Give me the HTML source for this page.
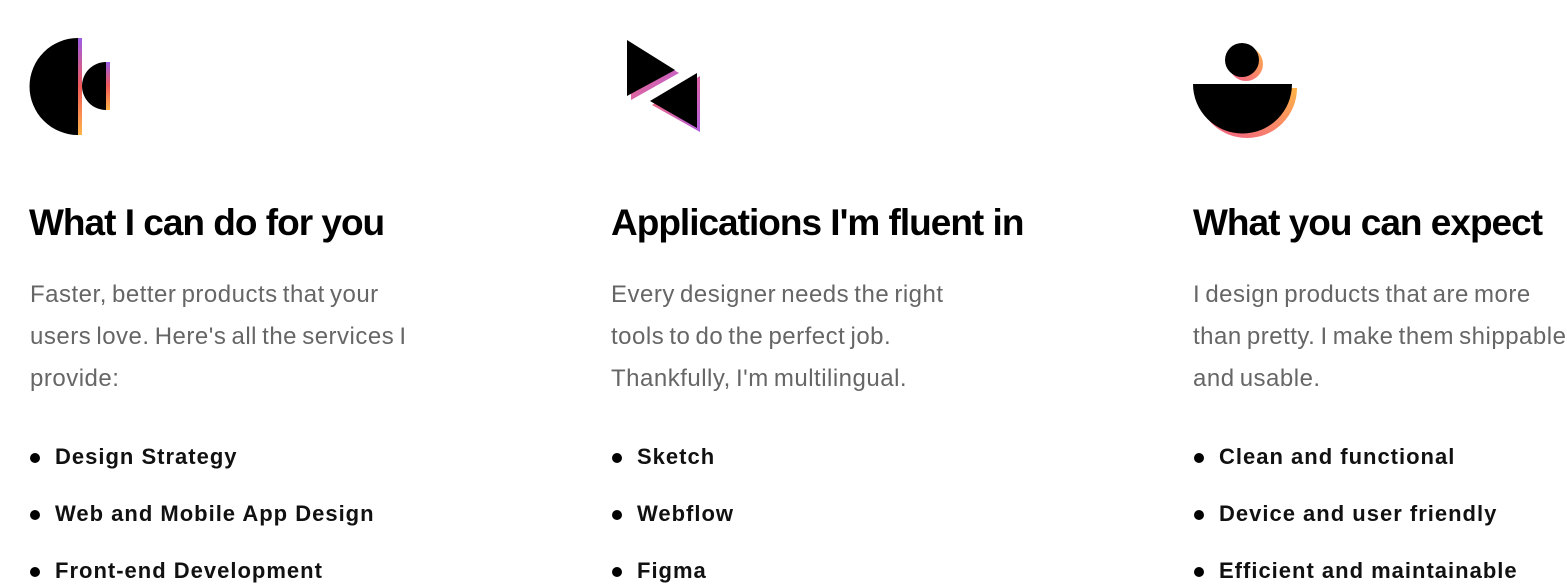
<!DOCTYPE html>
<html><head><style>
body{margin:0;width:1567px;height:583px;overflow:hidden;background:#fff;font-family:"Liberation Sans",sans-serif;position:relative}
h2{position:absolute;margin:0;top:200px;font-size:37px;font-weight:700;letter-spacing:-1.0px;color:#000;white-space:nowrap;line-height:46px}
.p{position:absolute;top:274px;font-size:24px;color:#666;line-height:42px;letter-spacing:0.5px;word-spacing:-2px;white-space:nowrap}
.li{position:absolute;left:25px;font-size:22px;font-weight:700;color:#111;letter-spacing:1px;white-space:nowrap;line-height:30px}
.li:before{content:"";position:absolute;left:-25px;top:11px;width:10px;height:10px;border-radius:50%;background:#000}
</style></head><body>
<svg width="1567" height="583" style="position:absolute;left:0;top:0">
<defs>
<linearGradient id="g1" x1="0" y1="0" x2="0" y2="1"><stop offset="0" stop-color="#9b5de5"/><stop offset=".5" stop-color="#f15a5a"/><stop offset="1" stop-color="#ffb347"/></linearGradient>
<linearGradient id="g2" x1="0" y1="0" x2="1" y2="1"><stop offset="0" stop-color="#ff6b6b"/><stop offset="1" stop-color="#b55ee0"/></linearGradient>
<linearGradient id="g3" x1="1" y1="0" x2="0" y2="1"><stop offset="0" stop-color="#ffb347"/><stop offset="1" stop-color="#f15a8a"/></linearGradient>
</defs>
<rect x="78" y="38" width="4" height="97" fill="url(#g1)"/>
<path d="M78 38 A48.5 48.5 0 0 0 78 135 Z" fill="#000"/>
<rect x="106" y="62" width="4" height="48" fill="url(#g1)"/>
<path d="M106 62 A24 24 0 0 0 106 110 Z" fill="#000"/>
<path d="M631 44 L631 100 L679 73 Z" fill="url(#g2)"/>
<path d="M627 40 L627 96 L675 70 Z" fill="#000"/>
<path d="M700 76 L700 132 L652 105 Z" fill="url(#g2)"/>
<path d="M697 73 L697 128 L650 101 Z" fill="#000"/>
<circle cx="1246" cy="64" r="17" fill="url(#g3)"/>
<circle cx="1242" cy="60" r="17" fill="#000"/>
<path d="M1197 88 L1297 88 A50 50 0 0 1 1197 88 Z" fill="url(#g3)"/>
<path d="M1193 84 L1292 84 A49.5 49.5 0 0 1 1193 84 Z" fill="#000"/>
</svg>
<h2 style="left:29px">What I can do for you</h2>
<div class="p" style="left:30px">Faster, better products that your<br>users love. Here's all the services I<br>provide:</div>
<div class="li" style="left:55px;top:442px">Design Strategy</div>
<div class="li" style="left:55px;top:499px">Web and Mobile App Design</div>
<div class="li" style="left:55px;top:556px">Front-end Development</div>
<h2 style="left:611px">Applications I'm fluent in</h2>
<div class="p" style="left:611px">Every designer needs the right<br>tools to do the perfect job.<br>Thankfully, I'm multilingual.</div>
<div class="li" style="left:637px;top:442px">Sketch</div>
<div class="li" style="left:637px;top:499px">Webflow</div>
<div class="li" style="left:637px;top:556px">Figma</div>
<h2 style="left:1193px">What you can expect</h2>
<div class="p" style="left:1193px">I design products that are more<br>than pretty. I make them shippable<br>and usable.</div>
<div class="li" style="left:1219px;top:442px">Clean and functional</div>
<div class="li" style="left:1219px;top:499px">Device and user friendly</div>
<div class="li" style="left:1219px;top:556px">Efficient and maintainable</div>
</body></html>
